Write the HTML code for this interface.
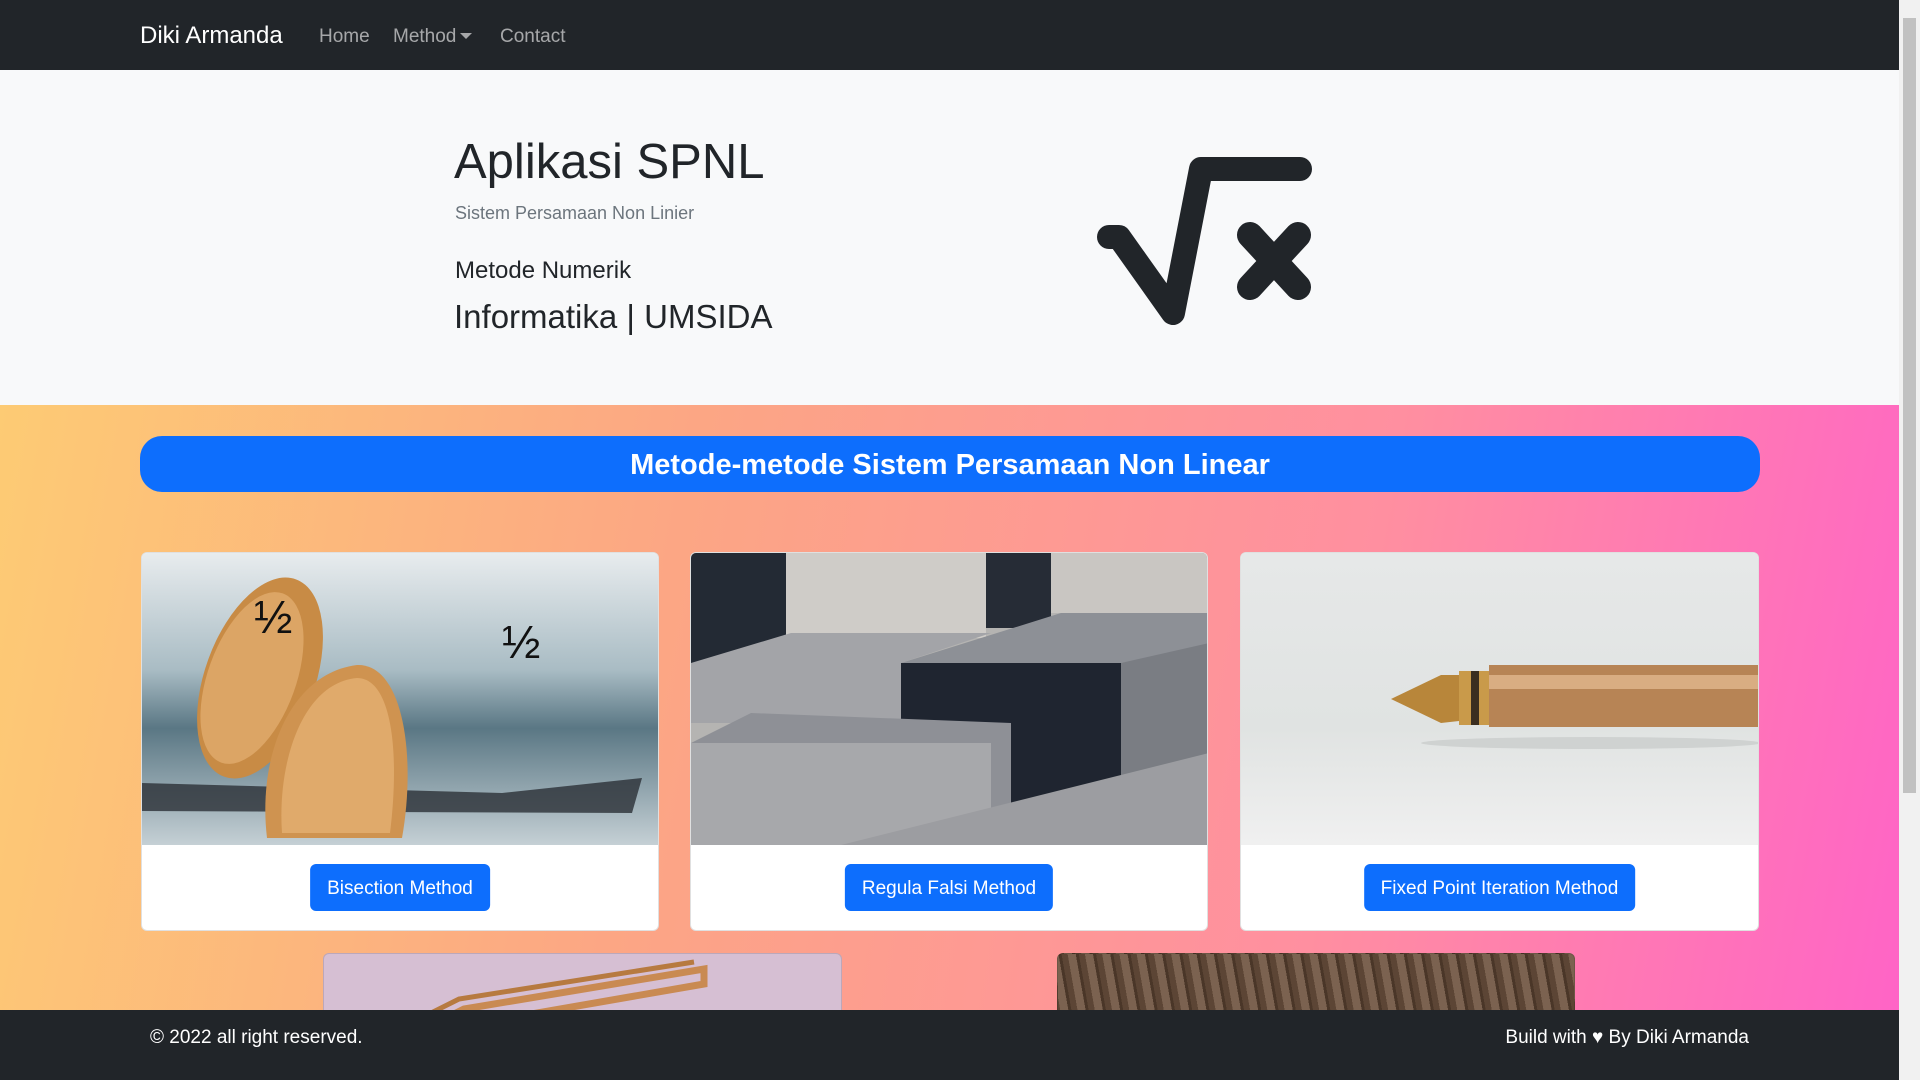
<!DOCTYPE html>
<html><head><meta charset="utf-8"><style>
*{box-sizing:border-box;margin:0;padding:0}
body{width:1920px;height:1080px;overflow:hidden;font-family:"Liberation Sans",sans-serif;background:#f8f9fa;position:relative}
.nav{position:absolute;left:0;top:0;width:1899px;height:70px;background:#212529}
.nav .brand{position:absolute;left:140px;top:22px;font-size:24px;color:#fff}
.nav a{position:absolute;top:26px;font-size:19px;color:rgba(255,255,255,.6)}
.caret{display:inline-block;border-left:6px solid transparent;border-right:6px solid transparent;border-top:6px solid rgba(255,255,255,.6);vertical-align:3px;margin-left:4px}
.hero{position:absolute;left:0;top:70px;width:1899px;height:335px;background:#f8f9fa;color:#212529}
.grad{position:absolute;left:0;top:405px;width:1899px;height:605px;background:linear-gradient(100deg,#fdcb74 0%,#fca684 35%,#ff8fa0 70%,#ff64c6 100%)}
.banner{position:absolute;left:140px;top:436px;width:1620px;height:56px;background:#0d6efd;border-radius:22px;color:#fff;font-size:29px;font-weight:bold;text-align:center;line-height:58px}
.card{position:absolute;top:552px;height:379px;background:#fff;border:1px solid rgba(0,0,0,.12);border-radius:6px;overflow:hidden}
.card .img{height:292px;position:relative;overflow:hidden}
.btn{position:absolute;top:311px;height:47px;background:#0d6efd;color:#fff;font-size:19px;line-height:49px;text-align:center;border-radius:6px;padding:0 17px;left:50%;transform:translateX(-50%);white-space:nowrap}
.c2{position:absolute;top:953px;height:80px;border:1px solid rgba(0,0,0,.12);border-radius:6px;overflow:hidden}
.foot{position:absolute;left:0;top:1010px;width:1899px;height:70px;background:#212529;color:#fff;font-size:19px}
.sb{position:absolute;right:0;top:0;width:21px;height:1080px;background:#f1f1f1}
.sb div{position:absolute;left:4px;top:18px;width:13px;height:775px;background:#c1c1c1}
</style></head><body>
<div class="nav"><span class="brand">Diki Armanda</span><a style="left:319px">Home</a><a style="left:393px">Method<span class="caret"></span></a><a style="left:500px">Contact</a></div>
<div class="hero">
<div style="position:absolute;left:454px;top:64px;font-size:49px">Aplikasi SPNL</div>
<div style="position:absolute;left:455px;top:133px;font-size:18px;color:#6c757d">Sistem Persamaan Non Linier</div>
<div style="position:absolute;left:455px;top:187px;font-size:24px;font-weight:300">Metode Numerik</div>
<div style="position:absolute;left:454px;top:228px;font-size:33px;font-weight:300">Informatika | UMSIDA</div>
<svg style="position:absolute;left:1093px;top:85px" width="220" height="170" viewBox="0 0 220 170"><g fill="none" stroke="#212529" stroke-linecap="round" stroke-linejoin="round"><path d="M16 82 L26 82 L80 158 L108 14 L207 14" stroke-width="24"/><path d="M157 80 L205 132 M205 80 L157 132" stroke-width="26"/></g></svg>
</div>
<div class="grad"></div>
<div class="banner">Metode-metode Sistem Persamaan Non Linear</div>
<div class="card" style="left:141px;width:518px"><div class="img" style="background:linear-gradient(180deg,#e8ecee 0%,#a9bcc4 40%,#5a7784 60%,#c5d0d5 100%)">
<svg width="518" height="292" style="position:absolute;left:0;top:0"><path d="M0 230 L360 240 L500 225 L490 260 L0 258Z" fill="#2a3036" opacity=".8"/><ellipse cx="118" cy="125" rx="55" ry="105" transform="rotate(20 118 125)" fill="#c88b45"/><ellipse cx="110" cy="125" rx="44" ry="90" transform="rotate(20 110 125)" fill="#dca565"/><path d="M125 285 C115 200 150 120 215 112 C260 110 275 200 260 285Z" fill="#cf9350"/><path d="M140 280 C135 210 160 130 215 125 C250 125 258 200 248 280Z" fill="#e0aa6b"/><text x="112" y="80" font-size="46" font-family="Liberation Sans" fill="#111">½</text><text x="360" y="105" font-size="46" font-family="Liberation Sans" fill="#111">½</text></svg>
</div><div class="btn">Bisection Method</div></div>
<div class="card" style="left:690px;width:518px"><div class="img" style="background:#9a9b9f">
<svg width="518" height="292" style="position:absolute;left:0;top:0"><rect width="518" height="292" fill="#b5b4b2"/><rect x="0" y="0" width="95" height="120" fill="#232a34"/><rect x="95" y="0" width="200" height="85" fill="#cfccc8"/><rect x="295" y="0" width="65" height="75" fill="#262c36"/><rect x="360" y="0" width="158" height="60" fill="#c9c6c2"/><path d="M0 110 L100 80 L300 80 L210 110 L210 170 L0 170Z" fill="#a3a4a8"/><path d="M210 110 L370 60 L518 60 L518 95 L430 110 L430 330 L210 330Z" fill="#8d9096"/><rect x="210" y="110" width="220" height="200" fill="#1f2530"/><path d="M430 110 L518 90 L518 292 L430 292Z" fill="#7a7d83"/><path d="M0 190 L60 160 L320 170 L320 292 L0 292Z" fill="#8e9096"/><path d="M0 190 L300 190 L300 292 L0 292Z" fill="#a7a8ab"/><path d="M150 292 L518 200 L518 292Z" fill="#9c9da1"/></svg>
</div><div class="btn">Regula Falsi Method</div></div>
<div class="card" style="left:1240px;width:519px"><div class="img" style="background:linear-gradient(180deg,#e6e8e8,#e0e3e2 60%,#f0f0f0)">
<svg width="519" height="292" style="position:absolute;left:0;top:0"><path d="M150 146 L200 122 L218 122 L218 168 L200 170Z" fill="#b8863a"/><rect x="218" y="118" width="30" height="54" fill="#c99a4a"/><rect x="248" y="112" width="271" height="62" fill="#b78455"/><rect x="248" y="122" width="271" height="14" fill="#d9ad82"/><rect x="230" y="118" width="8" height="54" fill="#3a2e20"/><ellipse cx="350" cy="190" rx="170" ry="6" fill="#cfd2d1"/></svg>
</div><div class="btn">Fixed Point Iteration Method</div></div>
<div class="c2" style="left:323px;width:519px;background:#d6bfd3"><svg width="519" height="80"><path d="M110 70 L140 55 L380 15 L380 30 L150 70" fill="none" stroke="#c98a52" stroke-width="7"/><path d="M105 80 L105 60 L135 45 L370 8" fill="none" stroke="#b77a40" stroke-width="5"/></svg></div>
<div class="c2" style="left:1057px;width:518px;background:repeating-linear-gradient(80deg,#5c4535 0 6px,#7b6250 6px 14px,#4a3628 14px 17px)"></div>
<div class="foot"><span style="position:absolute;left:150px;top:17px">© 2022 all right reserved.</span><span style="position:absolute;right:150px;top:17px">Build with ♥ By Diki Armanda</span></div>
<div class="sb"><div></div></div>
</body></html>
